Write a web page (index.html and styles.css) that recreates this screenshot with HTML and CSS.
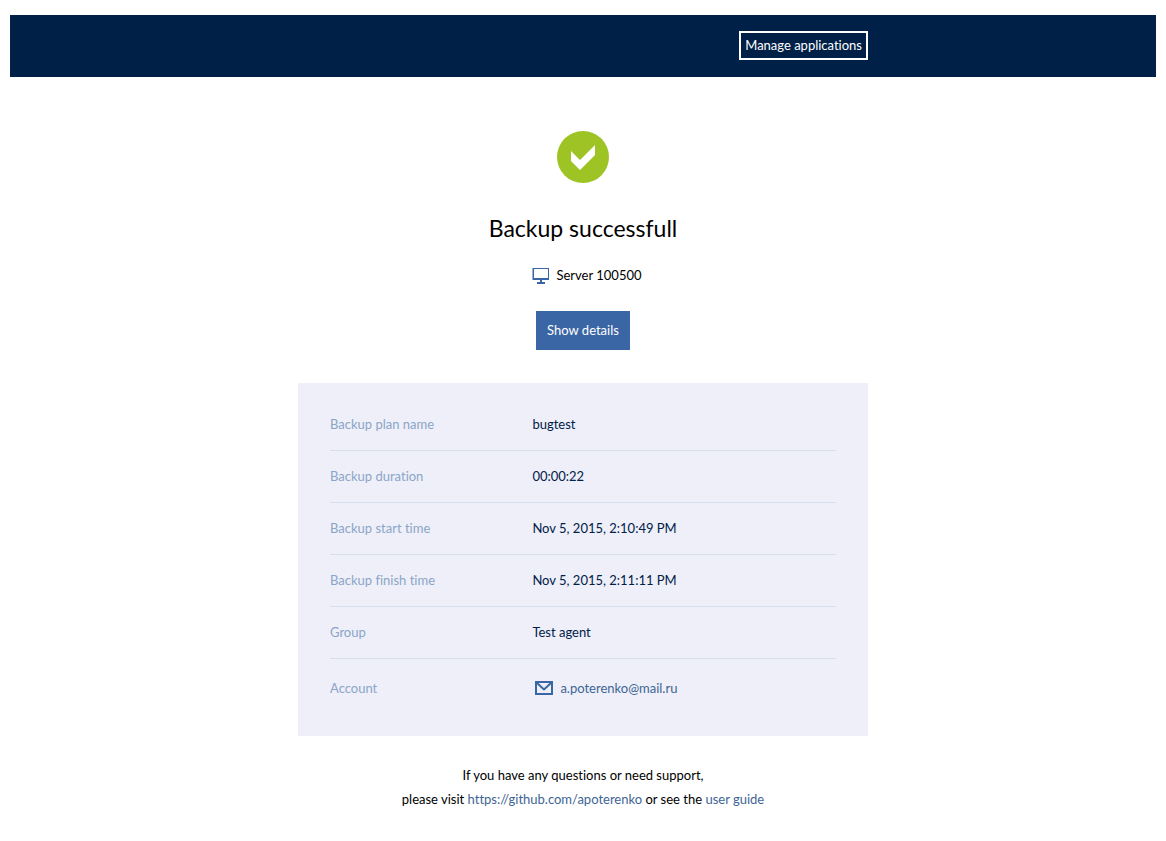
FILE: index.html
```html
<!DOCTYPE html>
<html lang="en">
<head>
<meta charset="utf-8">
<meta name="viewport" content="width=device-width, initial-scale=1">
<title>Backup successfull</title>
<link rel="stylesheet" href="styles.css">
</head>
<body>
<header class="header">
  <div class="header-inner">
    <a class="manage" href="#">Manage applications</a>
  </div>
</header>
<main class="content">
  <svg class="status-icon" viewBox="0 0 52 52" aria-hidden="true">
    <circle cx="26" cy="26" r="26" fill="#9dc424"/>
    <path d="M14 20 L23 29 L38 14 V24 L23 39 L14 30 Z" fill="#fff"/>
  </svg>
  <h1 class="title">Backup successfull</h1>
  <p class="server">
    <svg class="server-icon" viewBox="0 0 18 17" aria-hidden="true">
      <path d="M0.500 1H17V13H0.500Z M2 2V11H16V2Z" fill="#3a66a5" fill-rule="evenodd"/>
      <path d="M8 13H10V15H13V17H5V15H8Z" fill="#3a66a5"/>
    </svg>
    <span>Server 100500</span>
  </p>
  <button class="details-button" type="button">Show details</button>
  <section class="panel">
    <table class="details">
      <tbody>
        <tr><th scope="row">Backup plan name</th><td>bugtest</td></tr>
        <tr><th scope="row">Backup duration</th><td>00:00:22</td></tr>
        <tr><th scope="row">Backup start time</th><td>Nov 5, 2015, 2:10:49 PM</td></tr>
        <tr><th scope="row">Backup finish time</th><td>Nov 5, 2015, 2:11:11 PM</td></tr>
        <tr><th scope="row">Group</th><td>Test agent</td></tr>
        <tr class="account">
          <th scope="row">Account</th>
          <td>
            <a class="mail" href="mailto:a.poterenko@mail.ru">
              <svg class="mail-icon" viewBox="0 0 18 14" aria-hidden="true">
                <path d="M1 1H17V13H1Z M2 2L9 8.500L16 2" fill="none" stroke="#3a66a5" stroke-width="2"/>
              </svg>
              <span>a.poterenko@mail.ru</span>
            </a>
          </td>
        </tr>
      </tbody>
    </table>
  </section>
</main>
<footer class="footer">
  If you have any questions or need support,<br>
  please visit <a href="https://github.com/apoterenko">https://github.com/apoterenko</a> or see the <a href="#">user guide</a>
</footer>
</body>
</html>
```
FILE: styles.css
```css
* {
  box-sizing: border-box;
}

body {
  margin: 0;
  padding: 15px 10px 29px;
  background: #fff;
  color: #000;
  font: 13px/20px Lato, "Open Sans", sans-serif;
  font-variant-ligatures: none;
}

a {
  color: #3d6594;
  text-decoration: none;
}

.header {
  padding: 16px 0 17px;
  background: #002048;
}

.header-inner {
  display: flex;
  justify-content: flex-end;
  max-width: 570px;
  margin: 0 auto;
}

.manage {
  padding: 2px 4px 3px;
  border: 2px solid #fff;
  color: #fff;
}

.content {
  display: flex;
  flex-direction: column;
  align-items: center;
  max-width: 570px;
  margin: 0 auto;
  padding-top: 54px;
}

.status-icon {
  width: 52px;
  height: 52px;
}

.title {
  margin: 29px 0 21px;
  font-size: 23px;
  font-weight: 400;
  line-height: 32px;
}

.server {
  display: flex;
  align-items: center;
  gap: 6px;
  margin: 0 0 26px;
  padding-left: 8px;
}

.server-icon {
  width: 18px;
  height: 17px;
}

.details-button {
  padding: 9px 11px 10px;
  border: 0;
  background: #3a66a5;
  color: #fff;
  font: inherit;
  cursor: pointer;
}

.panel {
  width: 100%;
  margin-top: 33px;
  padding: 15px 32px 19px;
  background: #eeeff8;
}

.details {
  width: 100%;
  border-collapse: collapse;
  color: #002048;
}

.details th,
.details td {
  height: 52px;
  padding: 0;
  border-bottom: 1px solid #d5deec;
  text-align: left;
  font-weight: 400;
}

.details th {
  width: 40%;
  color: #8ba5c9;
}

.details .account th,
.details .account td {
  height: 59px;
  border-bottom: 0;
}

.mail {
  display: flex;
  align-items: center;
  gap: 7px;
  padding-left: 3px;
}

.mail-icon {
  width: 18px;
  height: 14px;
}

.footer {
  margin-top: 27px;
  text-align: center;
  line-height: 24px;
}
```
